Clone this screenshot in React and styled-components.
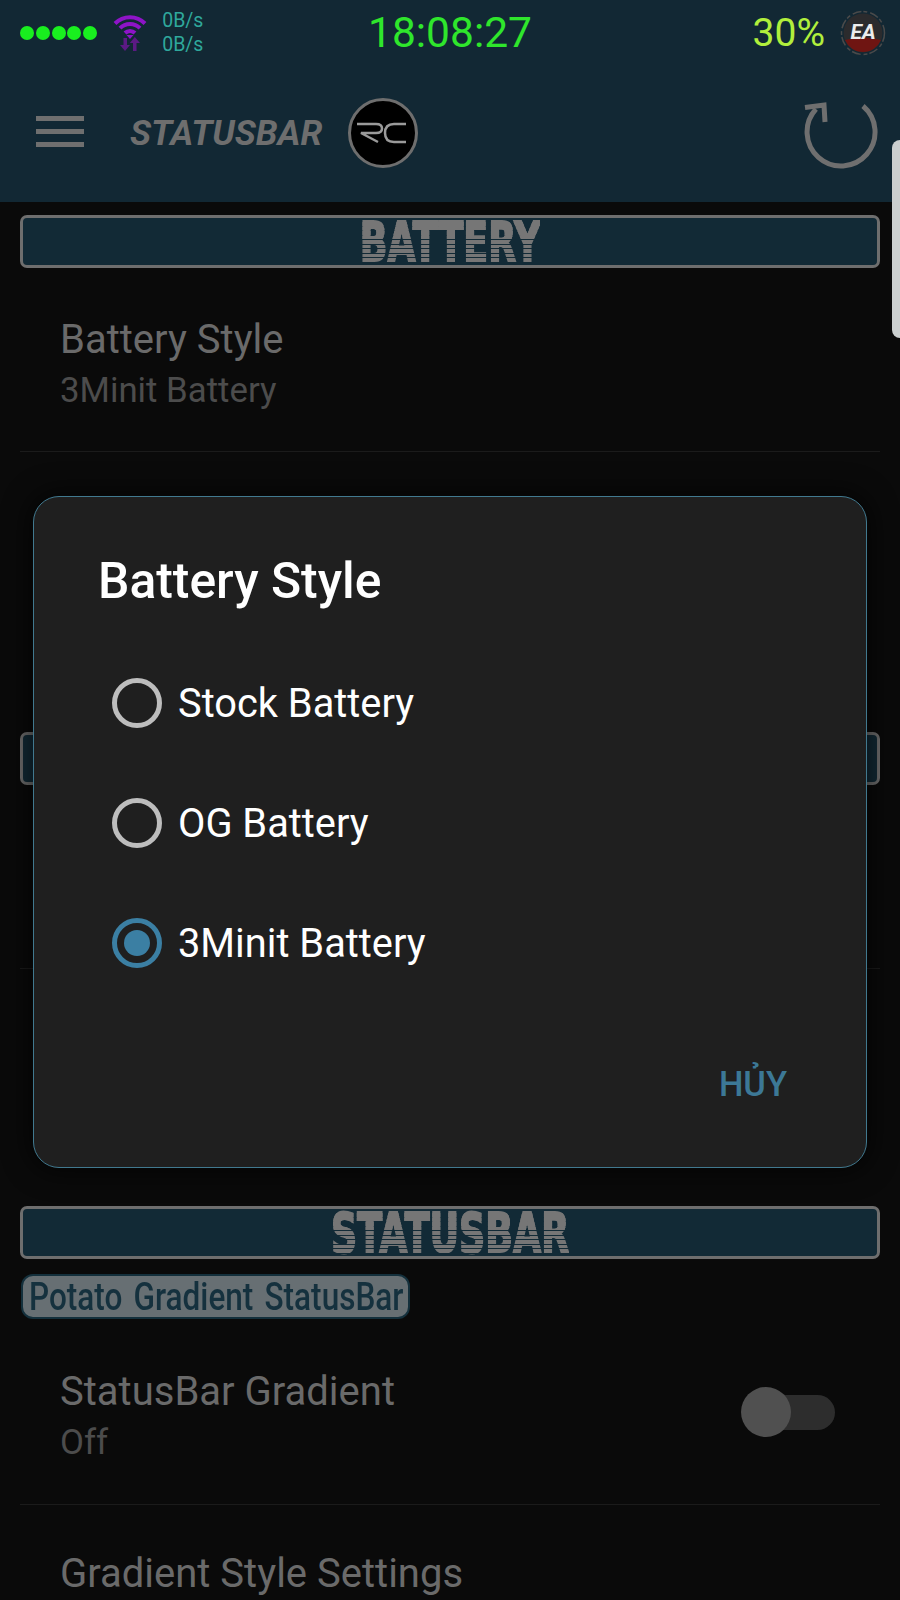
import React from 'react';
import styled, { createGlobalStyle } from 'styled-components';

const GlobalStyle = createGlobalStyle`
  html, body {
    margin: 0;
    padding: 0;
    background: #0a0a0a;
    font-family: Roboto, "Liberation Sans", sans-serif;
  }
  * { box-sizing: border-box; }
`;

const Page = styled.div`
  position: relative;
  width: 900px;
  height: 1600px;
  overflow: hidden;
  background: #0a0a0a;
`;

const Header = styled.header`
  height: 202px;
  background: #122834;
`;

const StatusRow = styled.div`
  display: grid;
  grid-template-columns: 1fr auto 1fr;
  align-items: center;
  height: 66px;
  padding: 0 20px;
`;

const StatusLeft = styled.div`
  display: flex;
  align-items: center;
`;

const StatusRight = styled.div`
  display: flex;
  align-items: center;
  justify-content: flex-end;
  margin-right: -6px;
`;

const Dots = styled.div`
  display: flex;
  gap: 1.8px;
`;

const Dot = styled.span`
  width: 14px;
  height: 14px;
  border-radius: 50%;
  background: #19ef1f;
`;

const Speed = styled.div`
  margin-left: 14px;
  font-size: 19.5px;
  line-height: 24px;
  color: #2fa89c;
`;

const Clock = styled.div`
  font-size: 42.5px;
  line-height: 66px;
  color: #2fe62c;
`;

const Percent = styled.div`
  font-size: 39px;
  color: #b1ef3c;
  margin-right: 15px;
`;

const Toolbar = styled.div`
  display: flex;
  align-items: center;
  height: 136px;
  padding: 0 20px 2px 36px;
`;

const Burger = styled.div`
  display: flex;
  flex-direction: column;
  gap: 8px;
  width: 48px;
  margin-top: -3px;
`;

const BurgerBar = styled.span`
  height: 5px;
  background: #6f6f6f;
`;

const Title = styled.div`
  margin-left: 46px;
  font-size: 35.2px;
  font-weight: 700;
  font-style: italic;
  color: #6e6e6e;
`;

const RefreshWrap = styled.div`
  margin: 6px 0 0 auto;
  display: flex;
`;

const Content = styled.main`
  padding: 13px 20px 0;
`;

const Banner = styled.div`
  display: flex;
  align-items: center;
  justify-content: center;
  height: 53px;
  background: #122a36;
  border: 3px solid #6e6e6e;
  border-radius: 7px;
`;

const BannerText = styled.span`
  display: inline-block;
  font-family: "DejaVu Sans", sans-serif;
  font-weight: 700;
  font-size: 56px;
  line-height: 47px;
  transform: scaleX(0.65);
  color: transparent;
  -webkit-text-stroke: 2px transparent;
  background:
    linear-gradient(#767676, #767676) 0 3px / 100% 18px no-repeat,
    repeating-linear-gradient(#767676 0 3.2px, #122a36 3.2px 4.5px);
  -webkit-background-clip: text;
  background-clip: text;
`;

const Row = styled.div`
  display: flex;
  align-items: flex-start;
  justify-content: space-between;
  height: ${({ $h }) => $h}px;
  padding: ${({ $top }) => $top}px 45px 0 40px;
  border-bottom: ${({ $line }) => ($line ? '1px solid #1b1b1b' : 'none')};
`;

const RowText = styled.div`
  display: flex;
  flex-direction: column;
`;

const RowTitle = styled.div`
  font-size: 40px;
  line-height: 46px;
  color: #6a6a6a;
`;

const RowSummary = styled.div`
  font-size: 34.8px;
  line-height: 46px;
  margin-top: 4px;
  color: #4c4c4c;
`;

const Chip = styled.div`
  display: flex;
  align-items: center;
  width: 389px;
  height: 45px;
  margin: 15px 0 0 1px;
  padding-left: 6px;
  background: #676f73;
  border: 2px solid #14303c;
  border-radius: 12px;
`;

const ChipText = styled.span`
  display: inline-block;
  white-space: nowrap;
  font-size: 38px;
  font-weight: 500;
  word-spacing: 4px;
  color: #15313e;
  transform: scaleX(0.83);
  transform-origin: left center;
`;

const Toggle = styled.div`
  position: relative;
  flex: none;
  width: 94px;
  height: 50px;
  margin-top: 18px;
  display: flex;
  align-items: center;
`;

const Track = styled.div`
  width: 100%;
  height: 35px;
  margin-left: 4px;
  border-radius: 18px;
  background: #2d2d2d;
`;

const Thumb = styled.div`
  position: absolute;
  left: 0;
  top: 0;
  width: 50px;
  height: 50px;
  border-radius: 50%;
  background: #505050;
`;

const EdgeHandle = styled.div`
  position: absolute;
  top: 140px;
  right: 0;
  width: 8px;
  height: 198px;
  border-radius: 12px 0 0 12px;
  background: #cbcfcf;
`;

const Dialog = styled.section`
  position: absolute;
  left: 33px;
  top: 496px;
  width: 834px;
  height: 672px;
  display: flex;
  flex-direction: column;
  padding: 54px 0 0 64px;
  background: #1f1f1f;
  border: 1.5px solid #41798f;
  border-radius: 26px;
  box-shadow: 0 0 24px 6px rgba(0, 0, 0, 0.55);
`;

const DialogTitle = styled.h2`
  margin: 0 0 67px;
  font-size: 49.8px;
  line-height: 60px;
  font-weight: 500;
  color: #fff;
`;

const Options = styled.div`
  display: flex;
  flex-direction: column;
  gap: 70px;
  padding-left: 14px;
`;

const Option = styled.div`
  display: flex;
  align-items: center;
  height: 50px;
  gap: 16px;
`;

const Radio = styled.span`
  display: flex;
  align-items: center;
  justify-content: center;
  width: 50px;
  height: 50px;
  border-radius: 50%;
  border: 5px solid ${({ $on }) => ($on ? '#3b7fa3' : '#bdbdbd')};
`;

const RadioDot = styled.span`
  width: 26px;
  height: 26px;
  border-radius: 50%;
  background: #3b7fa3;
`;

const OptionLabel = styled.span`
  font-size: 39.8px;
  color: #fff;
`;

const CancelButton = styled.div`
  position: absolute;
  right: 79px;
  bottom: 63px;
  font-size: 34.5px;
  font-weight: 500;
  line-height: 40px;
  color: #3c7896;
`;

const WifiIcon = () => (
  <svg width="36" height="38" viewBox="0 0 36 38" style={{ marginLeft: 15 }} fill="none">
    <g stroke="#8e14c8" strokeWidth="4">
      <path d="M3 9.500 A21 21 0 0 1 33 9.500" />
      <path d="M8 14.200 A14 14 0 0 1 28 14.200" />
      <path d="M13 19 A7 7 0 0 1 23 19" />
    </g>
    <path d="M14.500 21 L18 25 L21.500 21 Z" fill="#8e14c8" />
    <g fill="#5c1a84">
      <path d="M11.500 24 h3.500 v7 h3 l-5 6 l-5 -6 h3.500 Z" />
      <path d="M21 37 h3.500 v-8 h3.500 l-5.200 -6 l-5 6 h3.200 Z" />
    </g>
  </svg>
);

const EaBadge = () => (
  <svg width="46" height="46" viewBox="0 0 46 46">
    <circle cx="23" cy="23" r="21.500" fill="none" stroke="#4a4a4a" strokeWidth="1.500" strokeDasharray="9 2 4 3" />
    <circle cx="23" cy="23" r="19.500" fill="#2b2b2d" />
    <path d="M5 30 Q23 25 41 30 A19.500 19.500 0 0 1 5 30 Z" fill="#6f1512" />
    <text x="23" y="29" textAnchor="middle" fontFamily="Roboto, sans-serif" fontSize="21" fontWeight="700" fontStyle="italic" fill="#ececec">EA</text>
  </svg>
);

const RcLogo = () => (
  <svg width="72" height="72" viewBox="0 0 72 72" style={{ marginLeft: 25 }} fill="none">
    <circle cx="36" cy="36" r="33.500" fill="#000" stroke="#6e6e6e" strokeWidth="3" />
    <g stroke="#9a9a9a" strokeWidth="2.500">
      <path d="M10 27 H29 Q35 27 35 31.500 Q35 36 29 36 H14 L31 45" />
      <path d="M59 27 H47 Q38 27 38 36 Q38 45 47 45 H59" />
    </g>
  </svg>
);

const RefreshIcon = () => (
  <svg width="76" height="68" viewBox="0 0 76 68" fill="none" stroke="#6f6f6f" strokeWidth="5">
    <path d="M59 4 A34 34 0 1 1 12 7" />
    <path d="M1 5.500 L20 3 L21 20" />
  </svg>
);

const options = [
  { label: 'Stock Battery', on: false },
  { label: 'OG Battery', on: false },
  { label: '3Minit Battery', on: true },
];

const App = () => (
  <Page>
    <GlobalStyle />
    <Header>
      <StatusRow>
        <StatusLeft>
          <Dots>
            {[0, 1, 2, 3, 4].map((i) => (
              <Dot key={i} />
            ))}
          </Dots>
          <WifiIcon />
          <Speed>
            <div>0B/s</div>
            <div>0B/s</div>
          </Speed>
        </StatusLeft>
        <Clock>18:08:27</Clock>
        <StatusRight>
          <Percent>30%</Percent>
          <EaBadge />
        </StatusRight>
      </StatusRow>
      <Toolbar>
        <Burger>
          <BurgerBar />
          <BurgerBar />
          <BurgerBar />
        </Burger>
        <Title>STATUSBAR</Title>
        <RcLogo />
        <RefreshWrap>
          <RefreshIcon />
        </RefreshWrap>
      </Toolbar>
    </Header>

    <Content>
      <Banner>
        <BannerText>BATTERY</BannerText>
      </Banner>
      <Row $h={184} $top={49} $line>
        <RowText>
          <RowTitle>Battery Style</RowTitle>
          <RowSummary>3Minit Battery</RowSummary>
        </RowText>
      </Row>
      <Row $h={280} $top={0} />
      <Banner />
      <Row $h={184} $top={0} $line />
      <Row $h={237} $top={0} />
      <Banner>
        <BannerText>STATUSBAR</BannerText>
      </Banner>
      <Chip>
        <ChipText>Potato Gradient StatusBar</ChipText>
      </Chip>
      <Row $h={186} $top={50} $line>
        <RowText>
          <RowTitle>StatusBar Gradient</RowTitle>
          <RowSummary>Off</RowSummary>
        </RowText>
        <Toggle>
          <Track />
          <Thumb />
        </Toggle>
      </Row>
      <Row $h={90} $top={46}>
        <RowText>
          <RowTitle>Gradient Style Settings</RowTitle>
        </RowText>
      </Row>
    </Content>

    <EdgeHandle />

    <Dialog>
      <DialogTitle>Battery Style</DialogTitle>
      <Options>
        {options.map((option) => (
          <Option key={option.label}>
            <Radio $on={option.on}>{option.on && <RadioDot />}</Radio>
            <OptionLabel>{option.label}</OptionLabel>
          </Option>
        ))}
      </Options>
      <CancelButton>HỦY</CancelButton>
    </Dialog>
  </Page>
);

export default App;
